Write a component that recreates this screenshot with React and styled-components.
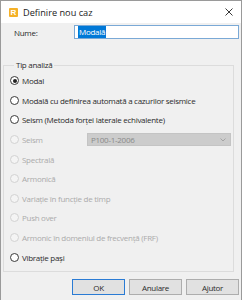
import React from "react";
import styled, { createGlobalStyle } from "styled-components";

const GlobalStyle = createGlobalStyle`
	html, body {
		margin: 0;
		padding: 0;
		background: #f0f0f0;
	}
	body {
		font-family: "Open Sans", "Liberation Sans", sans-serif;
		font-size: 8px;
		letter-spacing: -0.28px;
		color: #2b2b2b;
	}
`;

const Window = styled.div`
	width: 242px;
	height: 300px;
	box-sizing: border-box;
	border: 1px solid #9a9a9a;
	border-bottom: none;
	background: #f0f0f0;
	display: flex;
	flex-direction: column;
	overflow: hidden;
`;

const TitleBar = styled.div`
	height: 22px;
	background: #fff;
	display: flex;
	align-items: center;
	padding: 0 7px 0 8px;
	gap: 5px;
	font-size: 9.2px;
	letter-spacing: 0;
	color: #222;
`;

const AppIcon = styled.div`
	width: 9px;
	height: 9px;
	background: #f5b128;
	border-radius: 1px;
	color: #fff;
	font-size: 8px;
	font-weight: bold;
	line-height: 9px;
	text-align: center;
	font-family: "Liberation Sans", sans-serif;
`;

const Title = styled.span`
	flex: 1;
`;

const Close = styled.svg`
	width: 8px;
	height: 8px;
	margin-right: 1px;
`;

const NameRow = styled.div`
	display: flex;
	align-items: center;
	padding: 2px 2px 0 13px;
	height: 14px;
`;

const Label = styled.span`
	width: 60px;
`;

const Input = styled.div`
	flex: 1;
	height: 14px;
	box-sizing: border-box;
	border: 1px solid #7aa9d6;
	background: #fff;
	display: flex;
	align-items: center;
	padding-left: 3px;
`;

const Selected = styled.span`
	background: #0078d7;
	color: #fff;
	padding: 0 1px;
	line-height: 12px;
`;

const Group = styled.fieldset`
	margin: 21px 7px 0 2px;
	padding: 1px 0 0 6px;
	border: 1px solid #dcdcdc;
	height: 212px;
	box-sizing: border-box;
	display: flex;
	flex-direction: column;
`;

const Legend = styled.legend`
	padding: 0 2px;
	margin-left: 4px;
	line-height: 10px;
`;

const Option = styled.label`
	display: flex;
	align-items: center;
	height: 19.6px;
	gap: 3px;
	color: ${(p) => (p.disabled ? "#ababab" : "#2b2b2b")};
`;

const Radio = styled.span`
	width: 9px;
	height: 9px;
	box-sizing: border-box;
	border-radius: 50%;
	border: 1px solid ${(p) => (p.disabled ? "#d2d2d2" : "#3a3a3a")};
	background: ${(p) => (p.disabled ? "#f4f4f4" : "#fff")};
	display: flex;
	align-items: center;
	justify-content: center;
	&::after {
		content: "";
		width: 4px;
		height: 4px;
		border-radius: 50%;
		background: ${(p) => (p.checked ? "#222" : "transparent")};
	}
`;

const OptionText = styled.span`
	flex: 1;
`;

const Select = styled.div`
	width: 135px;
	height: 11px;
	margin-right: 2px;
	background: #cccccc;
	border: 1px solid #c4c4c4;
	display: flex;
	align-items: center;
	justify-content: space-between;
	padding: 0 4px 0 3px;
	color: #8a8a8a;
`;

const Footer = styled.div`
	display: flex;
	justify-content: flex-end;
	gap: 4px;
	padding: 7px 2px 0 0;
`;

const Button = styled.div`
	width: 53px;
	height: 16px;
	box-sizing: border-box;
	display: flex;
	align-items: center;
	justify-content: center;
	background: #e1e1e1;
	border: 1px solid ${(p) => (p.primary ? "#2a7bd4" : "#adadad")};
	color: #2b2b2b;
`;

const options = [
	{ label: "Modal", checked: true },
	{ label: "Modală cu definirea automată a cazurilor seismice" },
	{ label: "Seism (Metoda forței laterale echivalente)" },
	{ label: "Seism", disabled: true, select: "P100-1-2006" },
	{ label: "Spectrală", disabled: true },
	{ label: "Armonică", disabled: true },
	{ label: "Variație în funcție de timp", disabled: true },
	{ label: "Push over", disabled: true },
	{ label: "Armonic în domeniul de frecvență (FRF)", disabled: true },
	{ label: "Vibrație pași" },
];

export default function App() {
	return (
		<>
			<GlobalStyle />
			<Window>
				<TitleBar>
					<AppIcon>R</AppIcon>
					<Title>Definire nou caz</Title>
					<Close viewBox="0 0 8 8">
						<path d="M0.5 0.5 L7.5 7.5 M7.5 0.5 L0.5 7.5" stroke="#222" strokeWidth="0.9" />
					</Close>
				</TitleBar>
				<NameRow>
					<Label>Nume:</Label>
					<Input>
						<Selected>Modală</Selected>
					</Input>
				</NameRow>
				<Group>
					<Legend>Tip analiză</Legend>
					{options.map((o) => (
						<Option key={o.label} disabled={o.disabled}>
							<Radio checked={o.checked} disabled={o.disabled} />
							<OptionText>{o.label}</OptionText>
							{o.select && (
								<Select>
									<span>{o.select}</span>
									<svg width="6" height="4" viewBox="0 0 6 4">
										<path d="M0.5 0.5 L3 3 L5.5 0.5" fill="none" stroke="#999" strokeWidth="0.8" />
									</svg>
								</Select>
							)}
						</Option>
					))}
				</Group>
				<Footer>
					<Button primary>OK</Button>
					<Button>Anulare</Button>
					<Button>Ajutor</Button>
				</Footer>
			</Window>
		</>
	);
}
